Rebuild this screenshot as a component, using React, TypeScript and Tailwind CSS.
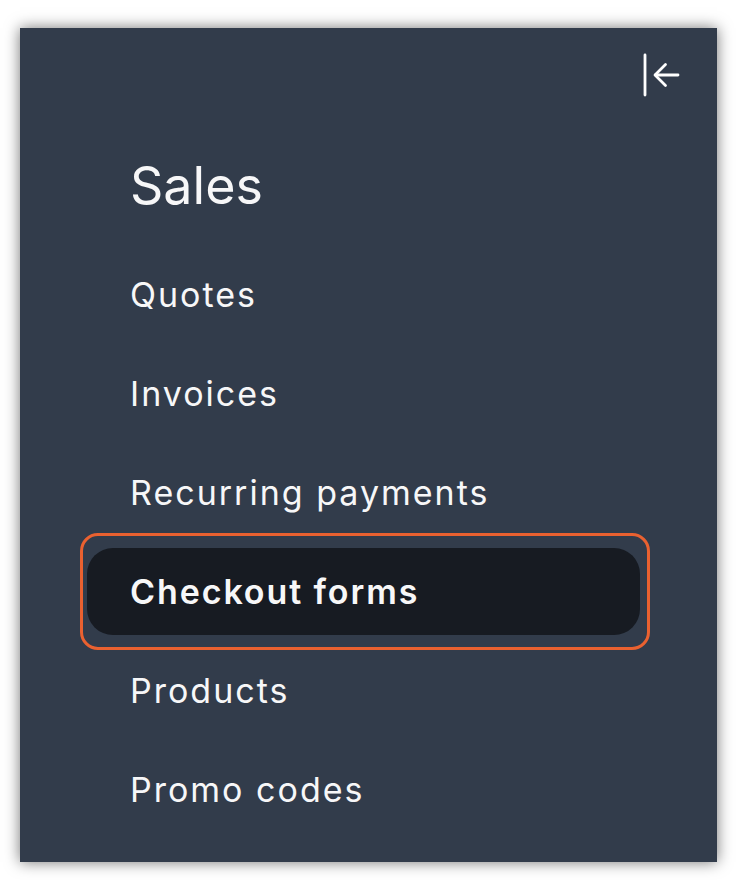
import React from "react";

const items = ["Quotes", "Invoices", "Recurring payments", "Checkout forms", "Products", "Promo codes"];

export default function App() {
  return (
    <div className="w-[736px] h-[880px] bg-white pt-[28px] pl-[20px]" style={{ fontFamily: "Inter, 'Noto Sans', sans-serif" }}>
      <div className="w-[697px] h-[834px] bg-[#323c4b] shadow-[0_0_14px_rgba(0,0,0,0.55)] flex flex-col">
        <div className="mt-[25px] h-[44px] flex justify-end pr-[37px]">
          <svg width="40" height="44" viewBox="0 0 40 44" fill="none" stroke="white" strokeWidth="2.8" strokeLinecap="round" strokeLinejoin="round">
            <line x1="5" y1="2" x2="5" y2="42" />
            <line x1="15.5" y1="22" x2="38" y2="22" />
            <polyline points="25.5,11.5 15,22 25.5,32.5" />
          </svg>
        </div>
        <div className="mt-[59px] pl-[110px] h-[60px] flex items-center text-[52px] leading-none text-[#f7f7f8]">Sales</div>
        <div className="mt-[29px] flex flex-col">
          {items.map((label) =>
            label === "Checkout forms" ? (
              <div key={label} className="relative h-[99px] flex">
                <div className="absolute top-[-9px] bottom-[-9px] left-[60px] right-[67px] border-[3px] border-[#ea6130] rounded-[18px]" />
                <div className="ml-[67px] mr-[77px] my-[6px] flex-1 rounded-[26px] bg-[#171b22] flex items-center pl-[43px] text-[34px] tracking-[1.9px] font-semibold text-[#f7f7f8]">
                  {label}
                </div>
              </div>
            ) : (
              <div key={label} className="h-[99px] flex items-center pl-[110px] text-[34px] tracking-[2px] text-[#f7f7f8]">
                {label}
              </div>
            )
          )}
        </div>
      </div>
    </div>
  );
}
